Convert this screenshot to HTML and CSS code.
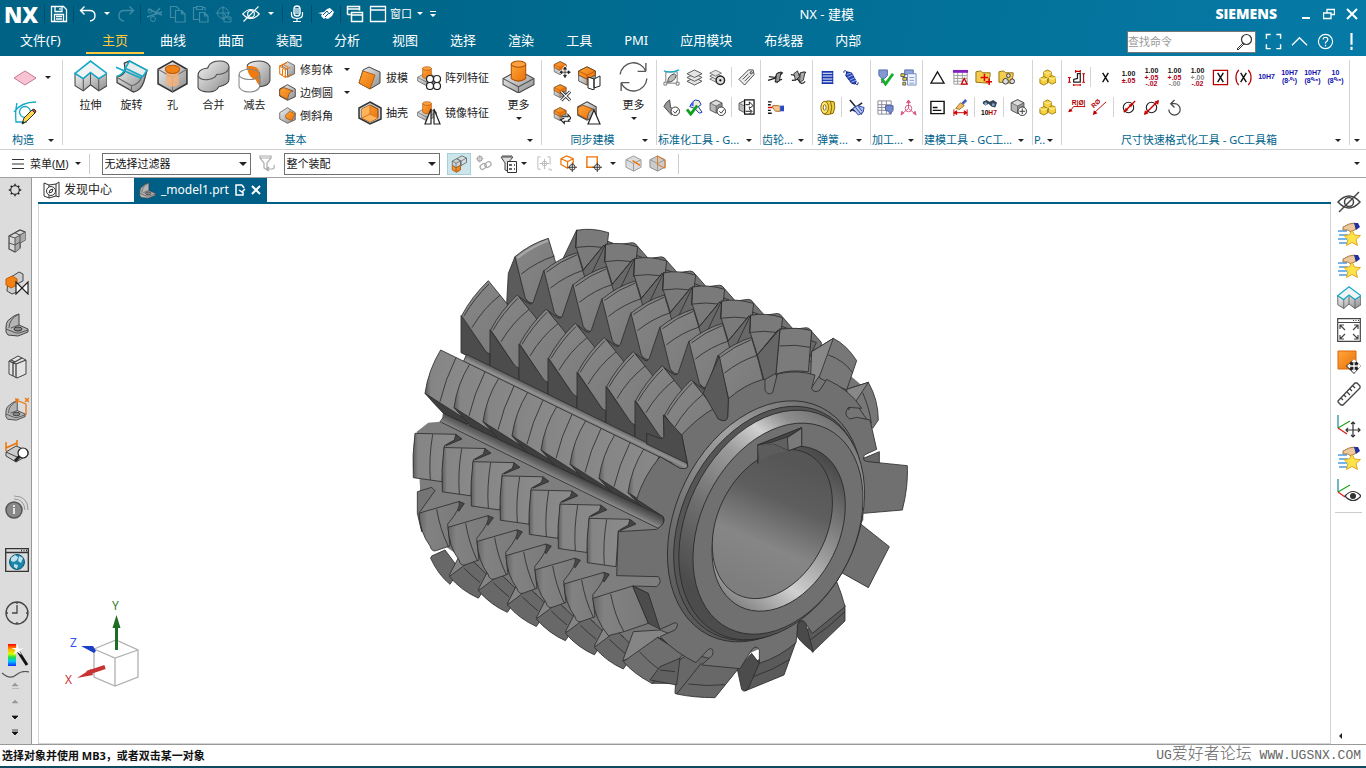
FILE: index.html
```html
<!DOCTYPE html>
<html lang="zh-CN">
<head>
<meta charset="utf-8">
<title>NX - 建模</title>
<link rel="stylesheet" href="styles.css">
</head>
<body>
<svg class="defs" aria-hidden="true">
<defs>
<linearGradient id="gs" x1="0" y1="0" x2="1" y2="1"><stop offset="0" stop-color="#f4f4f4"/><stop offset="1" stop-color="#8c8c8c"/></linearGradient>
<linearGradient id="go" x1="0" y1="0" x2="1" y2="1"><stop offset="0" stop-color="#ffa63a"/><stop offset="1" stop-color="#e8710a"/></linearGradient>
<linearGradient id="gb" x1="0" y1="0" x2="0" y2="1"><stop offset="0" stop-color="#ff0000"/><stop offset=".25" stop-color="#ffb000"/><stop offset=".45" stop-color="#d8ff00"/><stop offset=".6" stop-color="#20e040"/><stop offset=".78" stop-color="#00c8ff"/><stop offset="1" stop-color="#1030ff"/></linearGradient>
</defs>
<symbol id="save" viewBox="0 0 18 18"><path d="M1.500 1.500h12l3 3v12h-15zM5 1.500v5h7v-5M4.500 16.500v-7h9v7M6 11.500h6M6 14h6M10 3v2" fill="none" stroke="currentColor" stroke-width="1.300"/></symbol>
<symbol id="undo" viewBox="0 0 18 18"><path d="M5.500 1.500L1.500 5.500l4 4M1.500 5.500h9q5.500 0 5.500 5t-5 5.500" fill="none" stroke="currentColor" stroke-width="1.400"/></symbol>
<symbol id="cut" viewBox="0 0 18 18"><path d="M2 4l14 6M1 12l15-5M9 9l5-6" fill="none" stroke="currentColor" stroke-width="1.500"/><circle cx="4" cy="6" r="2" fill="none" stroke="currentColor"/><circle cx="7" cy="14" r="2.500" fill="none" stroke="currentColor"/></symbol>
<symbol id="copy" viewBox="0 0 18 18"><path d="M6.500 5.500h6l3.500 3.500v8h-9.500zM12.500 5.500v3.500h3.500M6.500 12.500h-5v-11h6l3 3" fill="none" stroke="currentColor" stroke-width="1.200"/></symbol>
<symbol id="paste" viewBox="0 0 18 18"><path d="M7 14.500H1.500v-12h3M10 2.500h3v3M4.500 1.500h6v3h-6zM7.500 7.500h5l3.500 3.500v6h-8.500zM12.500 7.500v3.500h3.500" fill="none" stroke="currentColor" stroke-width="1.200"/></symbol>
<symbol id="target" viewBox="0 0 18 18"><circle cx="8" cy="8" r="5.500" fill="none" stroke="currentColor"/><path d="M8 1v14M1 8h14M9 12h7v5h-7zM9 9l6 6" fill="none" stroke="currentColor"/></symbol>
<symbol id="eye" viewBox="0 0 24 24"><path d="M1 12Q12 0 23 12Q12 24 1 12z" fill="none" stroke="currentColor" stroke-width="1.500"/><circle cx="12" cy="12" r="4.500" fill="none" stroke="currentColor" stroke-width="1.500"/><path d="M2 22L22 2" stroke="currentColor" stroke-width="1.500"/></symbol>
<symbol id="mic" viewBox="0 0 18 18"><rect x="6" y="1" width="6" height="10" rx="3" fill="none" stroke="currentColor" stroke-width="1.400"/><path d="M3.500 7v2.500q0 4 5.500 4t5.500-4V7M9 13v4M5 16.500h8M8 3v6M10 3v6" fill="none" stroke="currentColor" stroke-width="1.200"/></symbol>
<symbol id="touch" viewBox="0 0 18 14"><path d="M1 6l6-1 3-3 3-1 4 4-2 4-4 3-3-1-1 1-3-3 1-2z" fill="currentColor"/><path d="M6 8l4-4 2 3 3-3M8 10l3-3" stroke="#005f80" fill="none"/></symbol>
<symbol id="wins" viewBox="0 0 18 18"><path d="M1.500 9.500v-8h12v4M1.500 4h12M1.500 9.500h3M5.500 7.500h11v9h-11zM5.500 10h11" fill="none" stroke="currentColor" stroke-width="1.500"/></symbol>
<symbol id="win" viewBox="0 0 18 18"><path d="M1.500 1.500h15v15h-15zM1.500 5h15" fill="none" stroke="currentColor" stroke-width="1.300"/></symbol>
<symbol id="mag" viewBox="0 0 18 18"><circle cx="11.500" cy="6.500" r="5" fill="none" stroke="#333" stroke-width="1.200"/><path d="M8 10l-6 6M9 11l-6 6M2 16l1 1" stroke="#333" fill="none"/></symbol>
<symbol id="full" viewBox="0 0 18 18"><path d="M1.500 6V1.500H6M12 1.500h4.500V6M16.500 12v4.500H12M6 16.500H1.500V12" fill="none" stroke="currentColor" stroke-width="1.500"/></symbol>
<symbol id="up" viewBox="0 0 18 18"><path d="M1 13L9 5l8 8" fill="none" stroke="currentColor" stroke-width="1.300"/></symbol>
<symbol id="help" viewBox="0 0 18 18"><circle cx="9" cy="9" r="7.500" fill="none" stroke="currentColor" stroke-width="1.200"/><path d="M6.500 7q0-2.500 2.500-2.500T11.500 7Q11.500 8.500 9 10v1M9 12.500V14" fill="none" stroke="currentColor" stroke-width="1.300"/></symbol>
<symbol id="plane" viewBox="0 0 24 24"><path d="M1 12L12 5l11 7-11 7z" fill="#f8c4d4" stroke="#c87890"/></symbol>
<symbol id="sketch" viewBox="0 0 24 24"><path d="M4 2Q2 10 3 21H14M1 11Q8 1 23 1" fill="none" stroke="#12a8c8" stroke-width="1.300"/><circle cx="12" cy="11" r="5.500" fill="none" stroke="#12a8c8" stroke-width="1.300"/><path d="M9 23l2-6 8-8 3 3-8 8z" fill="#ffd84a" stroke="#333"/><path d="M19 9l2-1 2 2-1 2z" fill="#d04040" stroke="#333"/><path d="M9 23l1-3 2 2z" fill="#222"/></symbol>
<symbol id="ext" viewBox="0 0 32 32"><path d="M1 13v12l8 5 7-6 8 6 8-5V13l-8 5-8-6-7 6z" fill="url(#gs)" stroke="#444"/><path d="M9 18v12M16 12v12M24 18v12" stroke="#555"/><path d="M1 13L16 1l16 12-8 5-8-6-7 6z" fill="#f2f4f4" stroke="#12a8c8" stroke-width="1.500"/></symbol>
<symbol id="rev" viewBox="0 0 32 32"><path d="M9 3l5-2 17 9-3 11q-3 9-10 10L2 22v-6Q8 16 10 10z" fill="url(#gs)" stroke="#444" stroke-width="1.300"/><path d="M2 17l14 8q7-1 10-9M16 25v6" stroke="#666" fill="none"/><path d="M14 1l17 9-4 6-17-8zM10 8Q8 14 2 16" fill="#e8ecec" stroke="#12a8c8" stroke-width="1.500"/><path d="M1 7l25 11" stroke="#12a8c8" stroke-width="1.500"/></symbol>
<symbol id="cube" viewBox="0 0 24 24"><path d="M12 1l10 5v12l-10 5-10-5V6z" fill="#ddd" stroke="#444"/><path d="M2 6l10 5v12L2 18z" fill="#b8b8b8"/><path d="M12 11l10-5v12l-10 5z" fill="#929292"/><path d="M2 6l10 5 10-5M12 11v12M12 1l10 5v12l-10 5-10-5V6z" fill="none" stroke="#444"/></symbol>
<symbol id="hole" viewBox="0 0 32 32"><path d="M16 1l14 8v14l-14 8-14-8V9z" fill="url(#gs)" stroke="#333" stroke-width="1.500"/><path d="M2 9l14 8 14-8M16 17v14" fill="none" stroke="#777"/><path d="M10 10v14q6 4 12 0V10z" fill="#f4b27a" opacity=".85"/><ellipse cx="16" cy="9" rx="7" ry="4" fill="#f08218" stroke="#c05a00"/></symbol>
<symbol id="unite" viewBox="0 0 32 32"><path d="M11 6q3-5 11-5t9 5v13q0 5-10 7-2 5-10 5T1 27V15q0-6 8-7 2 0 2-2z" fill="url(#gs)" stroke="#444"/><path d="M1 15q2 5 10 4 7-1 8-5 11 0 12-7" fill="none" stroke="#555"/></symbol>
<symbol id="sub" viewBox="0 0 32 32"><path d="M9 5q3-4 11-4t11 5v14q-1 5-10 6V14q0-5-12-5z" fill="url(#gs)" stroke="#444"/><path d="M9 6q12-1 12 8v11q-3-3-4-6-6-1-8-10z" fill="#ee7a10"/><path d="M1 14v12q2 5 10 5t10-5V14" fill="none" stroke="#888"/><ellipse cx="11" cy="14" rx="10" ry="5" fill="none" stroke="#888"/></symbol>
<symbol id="trim" viewBox="0 0 24 24"><path d="M12 1l10 5v12l-10 5V12L4 7z" fill="url(#gs)" stroke="#444"/><path d="M1 7l8 5v11l-8-5zM1 7l10-5M9 12l7-3M5 4l8 5M5 9v12M9 23l8-4" fill="none" stroke="#ec7408" stroke-width="1.500"/></symbol>
<symbol id="ocube" viewBox="0 0 24 24"><path d="M12 1l10 5v12l-10 5-10-5V6z" fill="url(#gs)" stroke="#444"/><path d="M12 1l10 5v5l-10 5-10-5V6z" fill="url(#go)" stroke="#6a4014"/><path d="M2 6l10 5 10-5M12 11v12" fill="none" stroke="#b85000"/></symbol>
<symbol id="blend" viewBox="0 0 24 24"><path d="M12 1l11 6v11l-11 5L1 17V7z" fill="url(#gs)" stroke="#444" stroke-width="1.300"/><path d="M1 8l6-3 13 5q-6 1-7 8l-1 4L1 16z" fill="url(#go)" stroke="#7a4010"/></symbol>
<symbol id="chamf" viewBox="0 0 24 24"><path d="M12 1l11 7v10l-11 5L1 17V8z" fill="url(#gs)" stroke="#444"/><path d="M9 12l6-6 8 4-5 9-8-3z" fill="url(#go)" stroke="#a05010"/></symbol>
<symbol id="draft" viewBox="0 0 24 24"><path d="M11 1l11 5v11l-10 6L1 17 5 4z" fill="url(#gs)" stroke="#444"/><path d="M5 5l12 4-5 14L1 17z" fill="url(#go)" stroke="#b86010"/></symbol>
<symbol id="shell" viewBox="0 0 24 24"><path d="M12 1l11 6v11l-11 5L1 17V7z" fill="#ccc" stroke="#333" stroke-width="1.500"/><path d="M12 4l8 4v9l-8 4-8-4V8z" fill="url(#go)" stroke="#7a4010"/><path d="M4 8l8-4v9l8 4-8 4-8-4z" fill="#ffb45a"/><path d="M12 4v9l-8 4M12 13l8 4" fill="none" stroke="#d87820"/></symbol>
<symbol id="boss" viewBox="0 0 32 32"><path d="M16 10l15 8v6l-15 8-15-8v-6z" fill="url(#gs)" stroke="#444"/><path d="M1 18l15 8 15-8M16 26v6" fill="none" stroke="#555"/><path d="M9 4v14q7 5 14 0V4z" fill="url(#go)" stroke="#a85000"/><ellipse cx="16" cy="4" rx="7" ry="3" fill="#ffa040" stroke="#a85000"/></symbol>
<symbol id="patt" viewBox="0 0 24 24"><use href="#boss" width="20" height="20"/><g fill="#fff" stroke="#222" stroke-width="1.200"><circle cx="13" cy="13" r="3.500"/><circle cx="20" cy="13" r="3.500"/><circle cx="13" cy="20" r="3.500"/><circle cx="20" cy="20" r="3.500"/></g></symbol>
<symbol id="mirr" viewBox="0 0 24 24"><use href="#boss" width="20" height="20"/><path d="M14 8v15H8zM17 8v15h6z" fill="#fff" stroke="#222" stroke-width="1.200"/></symbol>
<symbol id="mvf" viewBox="0 0 24 24"><use href="#ocube" width="19" height="19"/><path d="M16 8v14M9 15h14M16 8l-2 3h4zM16 22l-2-3h4zM9 15l3-2v4zM23 15l-3-2v4z" stroke="#fff" stroke-width="3"/><path d="M16 8v14M9 15h14M16 8l-2 3h4zM16 22l-2-3h4zM9 15l3-2v4zM23 15l-3-2v4z" stroke="#222" fill="#222"/></symbol>
<symbol id="delf" viewBox="0 0 24 24"><use href="#ocube" width="19" height="19"/><path d="M11 10l12 12M23 10L11 22" stroke="#222" stroke-width="4"/><path d="M11 10l12 12M23 10L11 22" stroke="#fff" stroke-width="1.500"/></symbol>
<symbol id="repf" viewBox="0 0 24 24"><use href="#ocube" width="19" height="19"/><path d="M11 13h9v-3l4 5-4 3M23 19h-8v3l-5-5 5-2" fill="#fff" stroke="#222" stroke-width="1.500"/></symbol>
<symbol id="offf" viewBox="0 0 24 24"><use href="#ocube" width="20" height="20"/><path d="M11 11l6 2v11l-6-2zM17 13l6-3v10l-6 2z" fill="#fff" stroke="#222"/></symbol>
<symbol id="resz" viewBox="0 0 24 24"><use href="#blend" width="20" height="20"/><path d="M17 9l6 14H11z" fill="#fff" stroke="#222" stroke-width="1.200"/></symbol>
<symbol id="cyc" viewBox="0 0 32 32"><path d="M3 14A13 13 0 0 1 28 11V3M28 11h-8M29 18A13 13 0 0 1 4 22v8M4 22h8" fill="none" stroke="#555" stroke-width="1.300"/></symbol>
<symbol id="chkf" viewBox="0 0 18 18"><path d="M3 3h12v12H3z" fill="none" stroke="#777"/><path d="M1 2q8 3 16-1" fill="none" stroke="#12a8c8" stroke-width="1.500"/><path d="M5 14q0-7 7-9l2 2q-2 7-9 7z" fill="#bbb" stroke="#444"/><g fill="#fff" stroke="#777"><path d="M1 14h3v3H1zM14 14h3v3h-3z"/></g></symbol>
<symbol id="lay" viewBox="0 0 18 18"><g fill="#e4e4e4" stroke="#555"><path d="M1 13l8 4 8-4-8-4z"/><path d="M1 9l8 4 8-4-8-4z"/><path d="M1 5l8 4 8-4-8-4z"/></g></symbol>
<symbol id="layg" viewBox="0 0 18 18"><use href="#lay" width="14" height="15"/><circle cx="12" cy="12" r="4.500" fill="#ddd" stroke="#222" stroke-width="1.500"/><circle cx="12" cy="12" r="1.200"/></symbol>
<symbol id="tag" viewBox="0 0 18 18"><path d="M1 11L11 1h5l1 5L7 17z" fill="#eee" stroke="#444"/><path d="M5 11l6-6M7 13l6-6" stroke="#444"/><circle cx="14" cy="4" r="1.200" fill="none" stroke="#333"/></symbol>
<symbol id="okp" viewBox="0 0 18 18"><path d="M1 8q2-5 6-7l1 8 7 3-6 5z" fill="#999" stroke="#444"/><circle cx="13" cy="13" r="4.500" fill="#fff" stroke="#333"/><path d="M11 13l2 2 3-4" fill="none" stroke="#333"/></symbol>
<symbol id="okc" viewBox="0 0 18 18"><use href="#cube" width="15" height="16"/><circle cx="13" cy="13" r="4.500" fill="#fff" stroke="#333"/><path d="M11 13l2 2 3-4" fill="none" stroke="#333"/></symbol>
<symbol id="okh" viewBox="0 0 18 18"><path d="M7 3l3-2 4 1 2 4-3 2 4 6-3 1-5-5-5-2z" fill="#f0ead0" stroke="#1030c0"/><path d="M1 11l4 5 7-9" fill="none" stroke="#10a020" stroke-width="3"/><path d="M8 3l-4 3 4 2" fill="#4060ff"/></symbol>
<symbol id="exp" viewBox="0 0 18 18"><use href="#cube" width="14" height="16"/><path d="M7 1h10v15H7z" fill="#fff" stroke="#111" stroke-width="1.300"/><path d="M8 6h4V3l4 4-4 3V8M8 13h6M12 11l3 2-3 3" fill="none" stroke="#111"/></symbol>
<symbol id="gear1" viewBox="0 0 18 18"><path d="M1 12l7-2 4-6h5M2 8l7 1 2 6M8 13l8-2M9 8l7-3" fill="none" stroke="#222" stroke-width="1.300"/><path d="M10 5l5-2-2 10-4 1z" fill="#999" stroke="#222"/></symbol>
<symbol id="gear2" viewBox="0 0 18 18"><path d="M1 6q5 0 8 6t7 1M2 12q7 0 8-5t7-3" fill="none" stroke="#222" stroke-width="1.300"/><path d="M4 5l4-3 2 6-4 4zM11 4l5-1-2 9-4 2z" fill="#aaa" stroke="#333"/></symbol>
<symbol id="hand" viewBox="0 0 18 18"><path d="M1 3h4M1 15h4M1 6h3M1 12h3" stroke="#111" stroke-width="1.500"/><path d="M1 9h5" stroke="#d00" stroke-width="1.500"/><path d="M6 7h6l2 1v5H9L6 9z" fill="#f6c890" stroke="#a07030"/><path d="M14 7h4v6h-4z" fill="#2848c8"/></symbol>
<symbol id="spr1" viewBox="0 0 18 18"><path d="M3 3h12M3 6h12M3 9h12M3 12h12M3 15h12" stroke="#1838b0" stroke-width="2"/><path d="M3.500 2v14M14.500 2v14" stroke="#1838b0"/></symbol>
<symbol id="spr2" viewBox="0 0 18 18"><path d="M5 3l5 1 5 9-1 3-4-1-6-8z" fill="#2848b8" stroke="#102080"/><path d="M5 6l5-2M6 9l6-3M8 12l6-3M10 14l5-2" stroke="#a8b8f8"/><path d="M5 3Q2 0 2 4M14 15q3 4 3-1" fill="none" stroke="#102080"/></symbol>
<symbol id="spr3" viewBox="0 0 18 18"><path d="M5 3q4-2 11 0 2 6-1 12-8 3-11 0z" fill="#f0d040" stroke="#806000"/><ellipse cx="6" cy="9" rx="4" ry="6.500" fill="#ffe878" stroke="#806000"/><ellipse cx="6" cy="9" rx="1.500" ry="3" fill="#fff" stroke="#806000"/><path d="M12 2q3 7 0 14" fill="none" stroke="#806000"/></symbol>
<symbol id="spr4" viewBox="0 0 18 18"><path d="M2 1l11 13M2 13L15 4M3 11l12 5" stroke="#223" stroke-width="1.600"/><path d="M5 10l5-3 7 2-1 5-5 3z" fill="#b8c4f0" stroke="#2040a0"/><path d="M8 9l5 6M11 8l4 5" stroke="#2040a0"/></symbol>
<symbol id="ncok" viewBox="0 0 18 18"><path d="M2 1h9v6L8 10H5L2 7z" fill="#8498d0" stroke="#5068b0"/><path d="M6 10l-1 5" stroke="#c050c0" stroke-width="2"/><path d="M5 10l4 6 8-11" fill="none" stroke="#14b02c" stroke-width="3"/></symbol>
<symbol id="ncdoc" viewBox="0 0 18 18"><path d="M5 1h9v5H5z" fill="#90a4d8" stroke="#5068b0"/><path d="M8 5h9v12H8z" fill="#f0f4ff" stroke="#7088c0"/><path d="M10 9h5M10 12h5M10 15h5" stroke="#8098d0"/><path d="M1 5h4v3H1zM3 9h4v3H3zM3 14h3v3H3z" fill="#e8d040" stroke="#555"/></symbol>
<symbol id="nctab" viewBox="0 0 18 18"><path d="M1 2h14v14H1zM1 6h14M1 9h14M1 12h14M5 2v14M10 2v14" fill="#fff" stroke="#889"/><path d="M9 7h8v5l-3 4-2-3-3-1z" fill="#7488cc" stroke="#5060a0"/></symbol>
<symbol id="csys" viewBox="0 0 18 18"><path d="M9 10V3M9 10l-6 5M9 10l6 5M9 1L7 4h4zM1 17l1-4 2 2zM17 17l-1-4-2 2z" fill="#d85880" stroke="#d85880"/><circle cx="9" cy="10" r="3.500" fill="none" stroke="#d85880"/></symbol>
<symbol id="tri" viewBox="0 0 18 18"><path d="M9 3l7 12H2z" fill="none" stroke="#111" stroke-width="1.300"/></symbol>
<symbol id="tab2" viewBox="0 0 18 18"><path d="M2 3h14v13H2zM2 7h14M2 10h14M2 13h14M6 3v13M11 3v13" fill="#fff" stroke="#999"/><path d="M1 1h16v3H1z" fill="#8420c0"/><path d="M13 10l3 6h-6z" fill="#fff" stroke="#c00" stroke-width="1.300"/></symbol>
<symbol id="fold1" viewBox="0 0 18 18"><path d="M1 3l5-1 2 2h8v3l-2 8-13-1z" fill="#f4cc50" stroke="#907010"/><path d="M10 5v8M6 9h8M15 10v7M11.500 13.500H18" stroke="#d00" stroke-width="1.600"/></symbol>
<symbol id="fold2" viewBox="0 0 18 18"><path d="M1 3l5-1 2 2h8v3l-2 8-13-1z" fill="#f4cc50" stroke="#907010"/><g fill="#ddd" stroke="#333"><circle cx="11" cy="7" r="2"/><circle cx="8" cy="13" r="3"/><circle cx="15" cy="13" r="2.500"/></g></symbol>
<symbol id="note" viewBox="0 0 18 18"><path d="M2 2.500h14v13H2zM4 9h5M4 12h9" fill="#fff" stroke="#111" stroke-width="1.500"/></symbol>
<symbol id="brush" viewBox="0 0 18 18"><path d="M14 0l2 2-4 4-2-2z" fill="#4060c0"/><path d="M9 4l4 3-5 4-4-1z" fill="#f0c060" stroke="#a07020"/><path d="M2 11v7M16 11v7M2 14.500h14M2 14.500l3-2v4zM16 14.500l-3-2v4z" stroke="#c00" fill="#c00"/></symbol>
<symbol id="cadd" viewBox="0 0 18 18"><use href="#cube" width="16" height="16"/><circle cx="13" cy="13" r="4.500" fill="#fff" stroke="#333"/><path d="M10 13h6M13 10v6" stroke="#333"/></symbol>
<symbol id="gold" viewBox="0 0 18 18"><g fill="#f6d040" stroke="#a08010"><path d="M5 3l4-2 4 2v5l-4 2-4-2z"/><path d="M1 10l4-2 4 2v5l-4 2-4-2z"/><path d="M10 9l4-2 4 2v5l-4 2-4-2z"/></g><path d="M1 10l4 2 4-2M5 3l4 2 4-2M10 9l4 2 4-2" fill="none" stroke="#fff6b0"/></symbol>
<symbol id="tdim" viewBox="0 0 18 18"><path d="M6 14h7V5h-3v5l-4 1z" fill="none" stroke="#222" stroke-width="1.300"/><path d="M0 9h3M0 14h3M1.500 9v5M15 5h3M15 14h3M16.500 5v9M8 1v3M13 1v3M8 2.500h5M6 16v2M13 16v2M6 17h7" stroke="#c00" stroke-width="1.200"/></symbol>
<symbol id="ix" viewBox="0 0 18 18"><path d="M6 4l6 10M12 4L6 14" stroke="#111" stroke-width="1.500"/></symbol>
<symbol id="ixb" viewBox="0 0 18 18"><path d="M1.500 1.500h15v15h-15z" fill="none" stroke="#b00" stroke-width="1.300"/><path d="M6 4l6 10M12 4L6 14" stroke="#111" stroke-width="1.500"/></symbol>
<symbol id="ixp" viewBox="0 0 18 18"><path d="M4 1Q1 4 1 9t3 8M14 1q3 3 3 8t-3 8" fill="none" stroke="#b00" stroke-width="1.300"/><path d="M6 4l6 10M12 4L6 14" stroke="#111" stroke-width="1.500"/></symbol>
<symbol id="dia1" viewBox="0 0 18 18"><circle cx="9" cy="9" r="5.500" fill="none" stroke="#222" stroke-width="1.200"/><path d="M4 14L16 2" stroke="#c00" stroke-width="1.500"/><path d="M5 13l1-4 3 3zM13 5l-1 4-3-3z" fill="#c00"/></symbol>
<symbol id="dia2" viewBox="0 0 18 18"><circle cx="9" cy="9" r="5.500" fill="none" stroke="#222" stroke-width="1.200"/><path d="M2 16L16 2" stroke="#c00" stroke-width="1.500"/><path d="M1 17l1-5 4 3zM17 1l-1 5-4-3z" fill="#c00"/></symbol>
<symbol id="rot" viewBox="0 0 18 18"><path d="M5 5H9A6 6 0 1 1 3 11M9 1L5 5l4 4" fill="none" stroke="#444" stroke-width="1.300"/></symbol>
<symbol id="filt" viewBox="0 0 18 18"><path d="M2 1h11v2L9 8v7l-3-2V8L2 3zM2 3h11M11 12l-2 2 2 2M9 14h5q3 0 2-4" fill="none" stroke="#aaa" stroke-width="1.200"/></symbol>
<symbol id="asm" viewBox="0 0 24 24"><path d="M9 5l7-4 6 3v6l-7 4-6-3z" fill="#d4dcdc" stroke="#555"/><path d="M9 5l6 3 7-4M15 8v6" fill="none" stroke="#666"/><path d="M3 8l6-3 5 3v6l-6 3-5-3z" fill="#c8d4d4" stroke="#555"/><path d="M3 14l5 3 6-3v6l-5 3-6-3z" fill="url(#go)" stroke="#a85000"/><path d="M3 8l5 3 6-3M8 11v12" fill="none" stroke="#666"/></symbol>
<symbol id="link" viewBox="0 0 18 18"><path d="M5 0v8M1 4h8" stroke="#bbb"/><g fill="none" stroke="#aaa" stroke-width="1.300"><circle cx="5" cy="4" r="2.500"/><rect x="5" y="10" width="7" height="5" rx="2.500" transform="rotate(-35 8 12)"/><rect x="10" y="8" width="7" height="5" rx="2.500" transform="rotate(-35 13 10)"/></g></symbol>
<symbol id="fdoc" viewBox="0 0 18 18"><path d="M1 2h12M1 2l4 6v7l3 1V8l5-6M2 1h10" fill="#ddd" stroke="#444"/><path d="M7.500 6.500h9v11h-9z" fill="#fff" stroke="#333"/><path d="M9 10h3M14 10h1M9 14h3M14 14h1" stroke="#333" stroke-width="1.500"/></symbol>
<symbol id="rect" viewBox="0 0 18 18"><path d="M5 2H2v13h3M12 2h3v8M13 15h3v2M9 4v11M4 9h10" fill="none" stroke="#bbb"/><circle cx="9" cy="9" r="2.500" fill="none" stroke="#bbb"/></symbol>
<symbol id="obox" viewBox="0 0 18 18"><path d="M1 4l6-3 7 3v6l-6 4-7-4zM1 4l7 3 6-3M8 7v7" fill="none" stroke="#ec7408" stroke-width="1.300"/><circle cx="13" cy="13" r="3" fill="#fff" stroke="#333"/><path d="M13 8v10M8 13h10" stroke="#333"/></symbol>
<symbol id="osq" viewBox="0 0 18 18"><path d="M2 2h11v11H2z" fill="none" stroke="#ec7408" stroke-width="1.500"/><circle cx="13" cy="13" r="3" fill="#fff" stroke="#333"/><path d="M13 8v10M8 13h10" stroke="#333"/></symbol>
<symbol id="cf1" viewBox="0 0 18 18"><path d="M9 1l8 4v8l-8 4-8-4V5z" fill="#ddd" stroke="#999"/><path d="M1 5l8 4 8-4M9 9v8" fill="none" stroke="#999"/><path d="M8 6l8 5" stroke="#ec7408" stroke-width="1.500"/></symbol>
<symbol id="cf2" viewBox="0 0 18 18"><path d="M9 1l8 4v8l-8 4-8-4V5z" fill="#ccc" stroke="#888"/><path d="M1 5l8 4 8-4M9 9v8" fill="none" stroke="#999"/><path d="M9 1v9M9 1l8 5v8l-8-4" fill="none" stroke="#ec7408"/></symbol>
<symbol id="cog" viewBox="0 0 18 18"><path d="M9 1v16M1 9h16M3.500 3.500l11 11M14.500 3.500l-11 11" stroke="#222" stroke-width="1.800"/><circle cx="9" cy="9" r="5.500" fill="#dcdcdc" stroke="#222" stroke-width="1.400"/></symbol>
<symbol id="disc" viewBox="0 0 18 18"><path d="M1 2l5 2v13l-5-2zM16 1l-3 2v12l3 1zM6 4l7-1M13 15l-7 2" fill="none" stroke="#333"/><circle cx="8" cy="10" r="4.500" fill="#fff" stroke="#333"/><path d="M6 12l1-3 3-1-1 3z" fill="none" stroke="#333"/></symbol>
<symbol id="part" viewBox="0 0 24 24"><path d="M1 15q0-7 4-9 4-4 9-5v11l9 4v3l-10 4-10-1-2-3z" fill="#b4b4b4" stroke="#444"/><path d="M4 15Q4 6 14 1" fill="none" stroke="#555"/><path d="M1 16l10 4h3l9-3M14 12l-8 3" fill="none" stroke="#555"/><ellipse cx="13" cy="16" rx="4" ry="2" fill="#888" stroke="#333"/></symbol>
<symbol id="nav" viewBox="0 0 24 24"><path d="M4 7l11-6 5 2v8l-5 3v5l-5 4-6-3z" fill="#d8d8d8" stroke="#444" stroke-width="1.200"/><path d="M10 9v14l5-4V6zM15 6v8l5-3V3z" fill="#aaa"/><path d="M4 7l6 2 10-6M10 9v14M4 14l6 2 5-3M15 6v13M10 4l5 2" fill="none" stroke="#555"/></symbol>
<symbol id="con" viewBox="0 0 24 24"><path d="M3 8L14 1l4 2v7l-6 3v8l-5 2-5-3z" fill="#ccc" stroke="#444"/><path d="M1 8l6-3 5 3v6l-6 3-5-3z" fill="#f08218" stroke="#c85a00"/><path d="M11 11l12 12V11L11 23z" fill="#fff" stroke="#222" stroke-width="1.200"/></symbol>
<symbol id="books" viewBox="0 0 24 24"><path d="M4 6l9-5 8 4v14l-9 4-8-4z" fill="#e4e4e4" stroke="#444"/><path d="M4 6l4 2v13M8 8l9-5M8 8l3 1v14M11 9l10-4M6 5l4 2" fill="none" stroke="#444" stroke-width="1.300"/></symbol>
<symbol id="pdim" viewBox="0 0 24 24"><use href="#part" y="3" width="21" height="21"/><path d="M11 1v4M21 7v11M11 3l10 4M20 1l4 4M24 1l-4 4M14 2l-3 1 2 3" fill="none" stroke="#ec7408" stroke-width="1.300"/></symbol>
<symbol id="mag2" viewBox="0 0 24 24"><path d="M1 13l10-6 12 5v4l-12 7-10-6z" fill="#ccc" stroke="#444"/><path d="M1 13l11 5 11-6" fill="none" stroke="#444"/><path d="M1 3v9M12 1v6M1 9l11-5" stroke="#ec7408" stroke-width="1.500"/><path d="M15 17l-5 5" stroke="#222" stroke-width="3"/><circle cx="18" cy="14" r="5" fill="#fff" stroke="#222" stroke-width="1.200"/></symbol>
<symbol id="info" viewBox="0 0 24 24"><circle cx="9" cy="15" r="8" fill="#888" stroke="#555" stroke-width="1.500"/><path d="M9 13v6M9 10v2" stroke="#fff" stroke-width="1.500"/><path d="M9 4q10 0 11 11M9 1q14 0 14 14" fill="none" stroke="#999"/></symbol>
<symbol id="web" viewBox="0 0 24 24"><path d="M.7.7h22.600v22.600H.7zM1 4.500h22M16 2.500h1M18.500 2.500h1M21 2.500h1" fill="none" stroke="#333" stroke-width="1.300"/><circle cx="12" cy="14" r="7.500" fill="#1c86a8" stroke="#0c5c78"/><path d="M6 10l4-3 3 2-1 3-3 2-3-1zM14 8l4 2-2 5-3-2zM9 16l4 1-1 4-3-2z" fill="#bfe2ee"/></symbol>
<symbol id="clock" viewBox="0 0 24 24"><circle cx="12" cy="12" r="11" fill="none" stroke="#444" stroke-width="1.300"/><path d="M12 4v8H7M12 1v2M12 21v2M1 12h2M21 12h2" fill="none" stroke="#444" stroke-width="1.300"/></symbol>
<symbol id="wand" viewBox="0 0 24 24"><path d="M3 1h8v22H3z" fill="url(#gb)"/><path d="M13 8l9 14" stroke="#111" stroke-width="3"/><path d="M12 1l1.500 5 5-1-4 3 2 4-4-3-4 3 2-5-4-2 5 0z" fill="#fff"/></symbol>
<symbol id="star" viewBox="0 0 24 24"><path d="M1 9h9M2 13h9M1 17h9M2 21h8" stroke="#4c9ce0" stroke-width="1.500"/><path d="M6 5l6-3 6-1 1 6-5 3-3-2H6z" fill="#eec89c" stroke="#a07848"/><path d="M17 1h4l2 4-4 3z" fill="#2030a0"/><path d="M15 8l2.500 5 6 .5-4.500 4 1.500 6-5.500-3-5.500 3L11 17.500l-4-4 5.500-.5z" fill="#ffe34a" stroke="#e0a820"/></symbol>
<symbol id="fit" viewBox="0 0 24 24"><path d="M.7.7h22.600v22.600H.7zM1 4.500h22M16 2.500h1M18.500 2.500h1M21 2.500h1M3 11V7h4M3 7l5 5M21 11V7h-4M21 7l-5 5M3 17v4h4M3 21l5-5M21 17v4h-4M21 21l-5-5" fill="none" stroke="#444" stroke-width="1.200"/></symbol>
<symbol id="omv" viewBox="0 0 24 24"><path d="M1 1h18v18H1z" fill="url(#go)" stroke="#d86808"/><path d="M17 9l7 7-7 8-8-8z" fill="#222"/><path d="M17 10v12M11 16h12M15 12l2-2 2 2M15 20l2 2 2-2M13 14l-2 2 2 2M21 14l2 2-2 2" fill="none" stroke="#fff" stroke-width="1.300"/></symbol>
<symbol id="ruler" viewBox="0 0 24 24"><path d="M1 19L18 1h2l3 3v2L6 23H4l-3-3zM4 16l2 2M7 13l2 2M10 10l3 3M13 7l2 2M16 4l2 2" fill="#fff" stroke="#444" stroke-width="1.300"/></symbol>
<symbol id="amv" viewBox="0 0 24 24"><path d="M1 1v13" stroke="#2090a8" stroke-width="1.300"/><path d="M1 14l12-7" stroke="#20a820" stroke-width="1.300"/><path d="M1 14l9 6" stroke="#e02020" stroke-width="1.300"/><path d="M16 8v15M9 16h14M14 10l2-2 2 2M14 21l2 2 2-2M11 14l-2 2 2 2M21 14l2 2-2 2" fill="none" stroke="#333" stroke-width="1.200"/></symbol>
<symbol id="aeye" viewBox="0 0 24 24"><path d="M1 1v13" stroke="#2090a8" stroke-width="1.300"/><path d="M1 14l12-7" stroke="#20a820" stroke-width="1.300"/><path d="M1 14l7 5" stroke="#e02020" stroke-width="1.300"/><path d="M8 18q8-9 16 0-8 9-16 0z" fill="#fff" stroke="#333" stroke-width="1.200"/><circle cx="16" cy="18" r="3" fill="#333"/></symbol>
</svg>

<header class="head">
  <div class="titlebar">
    <div class="quick">
      <strong class="logo">NX</strong><i class="vs"></i>
      <button aria-label="保存"><svg class="i18"><use href="#save"/></svg></button><i class="vs"></i>
      <button aria-label="撤销"><svg class="i18"><use href="#undo"/></svg></button><i class="caret near"></i>
      <button class="off flip" aria-label="重做"><svg class="i18"><use href="#undo"/></svg></button><i class="vs"></i>
      <button class="off" aria-label="剪切"><svg class="i18"><use href="#cut"/></svg></button>
      <button class="off" aria-label="复制"><svg class="i18"><use href="#copy"/></svg></button>
      <button class="off" aria-label="粘贴"><svg class="i18"><use href="#paste"/></svg></button>
      <button class="off" aria-label="重复"><svg class="i18"><use href="#target"/></svg></button>
      <button class="hide" aria-label="隐藏"><svg class="i18"><use href="#eye"/></svg></button><i class="caret wide"></i><i class="vs"></i>
      <button aria-label="语音"><svg class="i18"><use href="#mic"/></svg></button><i class="vs"></i>
      <button aria-label="触摸"><svg class="i18"><use href="#touch"/></svg></button><i class="vs"></i>
      <button aria-label="切换窗口"><svg class="i18"><use href="#wins"/></svg></button>
      <button class="winbtn"><svg class="i18"><use href="#win"/></svg>窗口</button><i class="caret"></i>
      <button aria-label="自定义"><svg class="i10" viewBox="0 0 10 10"><path d="M2 2h6v1H2zM2 5h6L5 8z" fill="#fff"/></svg></button>
    </div>
    <h1 class="title">NX - 建模</h1>
    <div class="wctl">
      <strong class="brand">SIEMENS</strong>
      <button aria-label="最小化"><svg class="i12" viewBox="0 0 12 12"><path d="M2 10h8" stroke="#fff" stroke-width="2"/></svg></button>
      <button aria-label="还原"><svg class="i12" viewBox="0 0 12 12"><path d="M4 5V1.500h7.500v5H8M.500 5h7.500v5.500H.500z" fill="none" stroke="#fff" stroke-width="1.300"/></svg></button>
      <button aria-label="关闭"><svg class="i12" viewBox="0 0 12 12"><path d="M1 1l10 10M11 1L1 11" stroke="#fff" stroke-width="2"/></svg></button>
    </div>
  </div>
  <div class="menurow">
    <nav class="tabs">
      <a class="file" href="#">文件(F)</a><a class="on" href="#">主页</a><a href="#">曲线</a><a href="#">曲面</a><a href="#">装配</a><a href="#">分析</a><a href="#">视图</a><a href="#">选择</a><a href="#">渲染</a><a href="#">工具</a><a href="#">PMI</a><a href="#">应用模块</a><a href="#">布线器</a><a href="#">内部</a>
    </nav>
    <div class="search"><input type="text" placeholder="查找命令" aria-label="查找命令"><button aria-label="搜索"><svg class="i18"><use href="#mag"/></svg></button></div>
    <div class="hicons">
      <button aria-label="全屏"><svg class="i16"><use href="#full"/></svg></button>
      <button aria-label="最小化功能区"><svg class="i16"><use href="#up"/></svg></button>
      <button aria-label="帮助"><svg class="i16"><use href="#help"/></svg></button>
      <button aria-label="提示"><svg class="i16" viewBox="0 0 16 16"><path d="M8 0v11M8 13v3" stroke="#fff" stroke-width="2"/></svg></button>
    </div>
  </div>
</header>

<section class="ribbon">
  <div class="group g1">
    <div class="gbody"><div class="col">
      <button class="med"><svg class="i24"><use href="#plane"/></svg><i class="caret"></i></button>
      <button class="med"><svg class="i24"><use href="#sketch"/></svg></button>
    </div></div>
    <div class="gfoot"><span>构造</span><i class="caret"></i></div>
  </div>
  <div class="group g2">
    <div class="gbody">
      <button class="big"><svg class="i32"><use href="#ext"/></svg>拉伸</button>
      <button class="big"><svg class="i32"><use href="#rev"/></svg>旋转</button>
      <button class="big"><svg class="i32"><use href="#hole"/></svg>孔</button>
      <button class="big"><svg class="i32"><use href="#unite"/></svg>合并</button>
      <button class="big"><svg class="i32"><use href="#sub"/></svg>减去</button>
      <div class="col three">
        <button class="sm"><svg class="i16"><use href="#trim"/></svg>修剪体<i class="caret"></i></button>
        <button class="sm"><svg class="i16"><use href="#blend"/></svg>边倒圆<i class="caret"></i></button>
        <button class="sm"><svg class="i16"><use href="#chamf"/></svg>倒斜角</button>
      </div>
      <div class="col c4">
        <button class="med"><svg class="i24"><use href="#draft"/></svg>拔模</button>
        <button class="med"><svg class="i24"><use href="#shell"/></svg>抽壳</button>
      </div>
      <div class="col c5">
        <button class="med"><svg class="i24"><use href="#patt"/></svg>阵列特征</button>
        <button class="med"><svg class="i24"><use href="#mirr"/></svg>镜像特征</button>
      </div>
      <button class="big"><svg class="i32"><use href="#boss"/></svg>更多<i class="caret"></i></button>
    </div>
    <div class="gfoot mid"><span>基本</span><i class="caret"></i></div>
  </div>
  <div class="group g3">
    <div class="gbody">
      <div class="col three">
        <button class="sm"><svg class="i18"><use href="#mvf"/></svg></button>
        <button class="sm"><svg class="i18"><use href="#delf"/></svg></button>
        <button class="sm"><svg class="i18"><use href="#repf"/></svg></button>
      </div>
      <div class="col">
        <button class="med"><svg class="i24"><use href="#offf"/></svg></button>
        <button class="med"><svg class="i24"><use href="#resz"/></svg></button>
      </div>
      <button class="big"><svg class="i32"><use href="#cyc"/></svg>更多<i class="caret"></i></button>
    </div>
    <div class="gfoot mid"><span>同步建模</span><i class="caret"></i></div>
  </div>
  <div class="group g4">
    <div class="gbody rows">
      <div class="irow"><button><svg class="i16"><use href="#chkf"/></svg></button><button><svg class="i16"><use href="#lay"/></svg></button><button><svg class="i16"><use href="#layg"/></svg></button><i class="is"></i><button><svg class="i16"><use href="#tag"/></svg></button></div>
      <div class="irow"><button><svg class="i16"><use href="#okp"/></svg></button><button><svg class="i16"><use href="#okh"/></svg></button><button><svg class="i16"><use href="#okc"/></svg></button><i class="is"></i><button><svg class="i16"><use href="#exp"/></svg></button></div>
    </div>
    <div class="gfoot"><span>标准化工具 - G...</span><i class="caret"></i></div>
  </div>
  <div class="group g5">
    <div class="gbody rows">
      <div class="irow"><button><svg class="i16"><use href="#gear1"/></svg></button><button><svg class="i16"><use href="#gear2"/></svg></button></div>
      <div class="irow"><button><svg class="i16"><use href="#hand"/></svg></button></div>
    </div>
    <div class="gfoot"><span>齿轮...</span><i class="caret"></i></div>
  </div>
  <div class="group g6">
    <div class="gbody rows">
      <div class="irow"><button><svg class="i16"><use href="#spr1"/></svg></button><button><svg class="i16"><use href="#spr2"/></svg></button></div>
      <div class="irow"><button><svg class="i16"><use href="#spr3"/></svg></button><i class="is"></i><button><svg class="i16"><use href="#spr4"/></svg></button></div>
    </div>
    <div class="gfoot"><span>弹簧...</span><i class="caret"></i></div>
  </div>
  <div class="group g5">
    <div class="gbody rows">
      <div class="irow"><button><svg class="i16"><use href="#ncok"/></svg></button><button><svg class="i16"><use href="#ncdoc"/></svg></button></div>
      <div class="irow"><button><svg class="i16"><use href="#nctab"/></svg></button><button><svg class="i16"><use href="#csys"/></svg></button></div>
    </div>
    <div class="gfoot"><span>加工...</span><i class="caret"></i></div>
  </div>
  <div class="group g8">
    <div class="gbody rows">
      <div class="irow"><button><svg class="i16"><use href="#tri"/></svg></button><button><svg class="i16"><use href="#tab2"/></svg></button><button><svg class="i16"><use href="#fold1"/></svg></button><button><svg class="i16"><use href="#fold2"/></svg></button></div>
      <div class="irow"><button><svg class="i16"><use href="#note"/></svg></button><button><svg class="i16"><use href="#brush"/></svg></button><i class="is"></i><button><svg class="i16" viewBox="0 0 18 18"><path d="M2 3l4-2 3 2 4-2 4 3-2 5-4-1-3-3-3 2-3-2z" fill="#345"/><circle cx="5" cy="5" r="1.500" fill="#8ac"/><circle cx="13" cy="6" r="1.500" fill="#8ac"/><text x="0" y="17" class="ib">10<tspan fill="#c00000">H7</tspan></text></svg></button><i class="is"></i><button><svg class="i16"><use href="#cadd"/></svg></button></div>
    </div>
    <div class="gfoot"><span>建模工具 - GC工...</span><i class="caret"></i></div>
  </div>
  <div class="group g9">
    <div class="gbody rows">
      <div class="irow"><button><svg class="i16"><use href="#gold"/></svg></button></div>
      <div class="irow"><button><svg class="i16"><use href="#gold"/></svg></button></div>
    </div>
    <div class="gfoot"><span>P..</span><i class="caret"></i></div>
  </div>
  <div class="group g10">
    <div class="gbody rows">
      <div class="irow">
        <button><svg class="i16"><use href="#tdim"/></svg></button><i class="is"></i>
        <button><svg class="i16"><use href="#ix"/></svg></button>
        <button class="tol"><b>1.00</b><b class="r">±.05</b></button>
        <button class="tol"><b>1.00</b><b class="r">+.05<br>-.02</b></button>
        <button class="tol"><b>1.00</b><b class="r">+.05<br><em>-.00</em></b></button>
        <button class="tol"><b>1.00</b><b class="r"><em>+.00</em><br>-.02</b></button>
        <button><svg class="i16"><use href="#ixb"/></svg></button>
        <button><svg class="i16"><use href="#ixp"/></svg></button>
        <button class="tol u"><b>10H7</b></button>
        <button class="tol u"><b>10H7</b><b>(8·⁰¹)</b></button>
        <button class="tol u"><b>10H7</b><b>(8⁰¹⁵)</b></button>
        <button class="tol u"><b>10</b><b>(8⁰¹⁵)</b></button>
      </div>
      <div class="irow"><button><svg class="i16" viewBox="0 0 18 18"><path d="M2 13l4-5h12" fill="none" stroke="#b00"/><path d="M0 14l2-4 3 3z" fill="#b00"/><text x="4" y="6" class="ib red">R|Ø|</text></svg></button><button><svg class="i16" viewBox="0 0 18 18"><path d="M3 15L16 3" stroke="#b00"/><path d="M2 17l1-5 4 3z" fill="#b00"/><text x="3" y="10" class="ib red" transform="rotate(-42 3 10)">RØ</text></svg></button><i class="is"></i><button><svg class="i16"><use href="#dia1"/></svg></button><button><svg class="i16"><use href="#dia2"/></svg></button><button><svg class="i16"><use href="#rot"/></svg></button></div>
    </div>
    <div class="gfoot mid"><span>尺寸快速格式化工具 - GC工具箱</span><i class="caret"></i></div>
  </div>
  <div class="group last"><div class="gfoot"><i class="caret"></i></div></div>
</section>

<section class="selbar">
  <button class="menubtn"><svg class="i12" viewBox="0 0 12 12"><path d="M0 1.500h12M0 6h12M0 10.500h12" stroke="#333"/></svg><span>菜单(<u>M</u>)</span><i class="caret"></i></button>
  <i class="ls"></i>
  <span class="sel s1"><select aria-label="选择过滤器"><option>无选择过滤器</option></select></span>
  <button class="tb"><svg class="i18"><use href="#filt"/></svg></button>
  <span class="sel s2"><select aria-label="选择范围"><option>整个装配</option></select></span>
  <button class="tb hot"><svg class="i18"><use href="#asm"/></svg></button>
  <button class="tb"><svg class="i16"><use href="#link"/></svg></button>
  <button class="tb dd"><svg class="i18"><use href="#fdoc"/></svg><i class="caret"></i></button>
  <button class="tb"><svg class="i16"><use href="#rect"/></svg></button>
  <button class="tb"><svg class="i16"><use href="#obox"/></svg></button>
  <button class="tb dd w"><svg class="i16"><use href="#osq"/></svg><i class="caret"></i></button>
  <button class="tb"><svg class="i16"><use href="#cf1"/></svg></button>
  <button class="tb"><svg class="i16"><use href="#cf2"/></svg></button>
  <i class="ls"></i><i class="caret end"></i>
</section>

<main class="main">
  <aside class="side">
    <button class="s0" aria-label="设置"><svg class="i14"><use href="#cog"/></svg></button>
    <button aria-label="装配导航器"><svg class="i24"><use href="#nav"/></svg></button>
    <button aria-label="约束导航器"><svg class="i24"><use href="#con"/></svg></button>
    <button aria-label="部件导航器"><svg class="i24"><use href="#part"/></svg></button>
    <button aria-label="重用库"><svg class="i24"><use href="#books"/></svg></button>
    <button aria-label="视图管理器"><svg class="i24"><use href="#pdim"/></svg></button>
    <button aria-label="检查"><svg class="i24"><use href="#mag2"/></svg></button>
    <button class="tall first" aria-label="信息"><svg class="i24"><use href="#info"/></svg></button>
    <button class="tall" aria-label="网页浏览器"><svg class="i24"><use href="#web"/></svg></button>
    <button class="tall" aria-label="历史记录"><svg class="i24"><use href="#clock"/></svg></button>
    <button class="wandb" aria-label="角色"><svg class="i24"><use href="#wand"/></svg></button>
    <svg class="scr" viewBox="0 0 32 70"><path d="M2 2q8 7 14 2t13-3" fill="none" stroke="#555" stroke-width="1.200"/><path d="M12 15l3-3 3 3zM12 17.500h7M12 32l3-3 3 3z" fill="#999" stroke="#999" stroke-width=".5"/><path d="M12 45h6l-3 3zM12 59h6M12 61h6l-3 3z" fill="#111" stroke="#111" stroke-width=".7"/></svg>
  </aside>
  <div class="work">
    <div class="ptabs">
      <a href="#" class="pt"><svg class="i18"><use href="#disc"/></svg>发现中心</a>
      <a href="#" class="pt on"><svg class="i16"><use href="#part"/></svg>_model1.prt<svg class="i12" viewBox="0 0 12 12"><path d="M8 1H2v10h7V8M5 6l3 2 3-3M8 1l2 3" fill="none" stroke="#fff" stroke-width="1.500"/></svg><svg class="i10" viewBox="0 0 10 10"><path d="M1 1l8 8M9 1L1 9" stroke="#fff" stroke-width="2"/></svg></a>
    </div>
    <div class="canvas">
    <svg class="scene" viewBox="39 204 1291 539" preserveAspectRatio="xMidYMid meet" role="img" aria-label="滚刀模型">
    <defs>
      <linearGradient id="fA" x1="0" x2="1" y1="0" y2="1"><stop offset="0" stop-color="#878787"/><stop offset="1" stop-color="#787878"/></linearGradient>
      <linearGradient id="fE" x1="0" x2="1"><stop offset="0" stop-color="#5c5c5c"/><stop offset=".12" stop-color="#858585"/><stop offset="1" stop-color="#8b8b8b"/></linearGradient>
      <linearGradient id="fF" x1="0" x2="1"><stop offset="0" stop-color="#666"/><stop offset=".2" stop-color="#828282"/><stop offset="1" stop-color="#7a7a7a"/></linearGradient>
      <linearGradient id="gv" gradientUnits="userSpaceOnUse" x1="500" y1="550" x2="487" y2="577"><stop offset="0" stop-color="#606060"/><stop offset=".5" stop-color="#949494"/><stop offset="1" stop-color="#606060"/></linearGradient>
      <linearGradient id="gv2" gradientUnits="userSpaceOnUse" x1="500" y1="756" x2="485" y2="787"><stop offset="0" stop-color="#4a4a4a"/><stop offset=".5" stop-color="#6c6c6c"/><stop offset="1" stop-color="#969696"/></linearGradient>
      <linearGradient id="r1" gradientUnits="userSpaceOnUse" x1="100" y1="950" x2="560" y2="330" gradientTransform="rotate(63.800) translate(-315 -604)"><stop offset="0" stop-color="#555"/><stop offset=".4" stop-color="#777"/><stop offset=".72" stop-color="#a2a2a2"/><stop offset="1" stop-color="#707070"/></linearGradient>
      <linearGradient id="r3" gradientUnits="userSpaceOnUse" x1="100" y1="800" x2="500" y2="290" gradientTransform="rotate(63.800) translate(-335 -615)"><stop offset="0" stop-color="#4c4c4c"/><stop offset=".3" stop-color="#6c6c6c"/><stop offset=".6" stop-color="#9a9a9a"/><stop offset=".76" stop-color="#d0d0d0"/><stop offset=".88" stop-color="#8e8e8e"/><stop offset="1" stop-color="#747474"/></linearGradient>
      <linearGradient id="r5" gradientUnits="userSpaceOnUse" x1="240" y1="860" x2="550" y2="460" gradientTransform="rotate(63.800) translate(-356 -626)"><stop offset="0" stop-color="#858585"/><stop offset=".27" stop-color="#d0d0d0"/><stop offset=".55" stop-color="#999"/><stop offset="1" stop-color="#4a4a4a"/></linearGradient>
      <linearGradient id="r6" gradientUnits="userSpaceOnUse" x1="250" y1="800" x2="410" y2="430" gradientTransform="rotate(63.800) translate(-337 -612)"><stop offset="0" stop-color="#7e7e7e"/><stop offset=".35" stop-color="#868686"/><stop offset=".7" stop-color="#5e5e5e"/><stop offset="1" stop-color="#565656"/></linearGradient>
      <g id="a1"><path d="M530 30L488 118 540 200 600 160 640 70z" fill="#686868"/><path d="M530 31Q575 22 626 38L620 90 612 75 550 150 528 80z" fill="#7a7a7a"/><path d="M530 82Q570 76 606 82M530 30L526 85M612 75L550 150"/></g>
      <g id="b1"><path d="M345 108L313 203Q308 214 298 208L271 188 330 270 420 320 400 250 380 243 353 113z" fill="#5b5b5b"/><path d="M345 110Q390 72 445 55L467 128 480 180 400 250Q385 250 376 235z" fill="url(#fA)"/><path d="M352 114Q395 80 444 62" class="hl"/><path d="M364 162Q410 125 464 108"/></g>
      <g id="c1"><path d="M183 287L183 398 270 442 270 402 255 390z" fill="#4c4c4c"/><path d="M185 287Q215 230 265 182L320 250 360 320 270 402Q260 400 253 388z" fill="url(#fA)"/><path d="M192 288Q222 236 267 192" class="hl"/><path d="M216 323Q250 265 300 226"/></g>
      <g id="d1"><path d="M75 520L100 548 130 580 200 612 220 600 180 560z" fill="#3e3e3e"/><path d="M122 390L208 432 225 455 185 590 75 520Q85 450 122 390z" fill="url(#fE)"/><path d="M168 413Q135 480 120 545"/></g>
      <g id="e1"><path d="M690 208L708 222 660 242 680 215z" fill="#444"/><path d="M567 205L690 208 685 225 655 242 648 350 562 338Q558 270 567 205z" fill="url(#fE)"/><path d="M620 208Q608 280 613 345"/></g>
      <g id="f1"><path d="M612 367L628 373 612 396 600 380z" fill="#484848"/><path d="M492 402L612 367Q620 385 578 435L585 500 545 514Q530 520 525 500 495 460 492 402z" fill="url(#fF)"/><path d="M545 390Q555 450 580 502"/></g>
      <g id="h1"><path d="M583 588L614 528 670 560 640 600z" fill="#858585"/><path d="M583 592L650 542 710 600 670 657Q620 635 583 592z" fill="#686868"/><path d="M628 568Q650 590 675 610"/></g>
      <g id="z1"><path d="M655 74Q680 70 697 68 706 68 712 78L742 112 740 190 680 150z" fill="#737373"/></g>
      <g id="a2"><use href="#a1"/><use href="#a1" x="87" y="42.500"/></g><g id="a4"><use href="#a2"/><use href="#a2" x="174" y="85"/></g>
      <g id="b2"><use href="#b1"/><use href="#b1" x="87" y="42.500"/></g>
      <g id="c2"><use href="#c1"/><use href="#c1" x="87" y="42.500"/></g><g id="c4"><use href="#c2"/><use href="#c2" x="174" y="85"/></g>
      <g id="d2"><use href="#d1"/><use href="#d1" x="87" y="42.500"/></g><g id="d4"><use href="#d2"/><use href="#d2" x="174" y="85"/></g>
    </defs>
    <g class="gear" stroke-linejoin="round">
      <g transform="translate(400 220) scale(.33333)">
        <path d="M500 140L640 110 700 130 1290 415 1390 500 1420 560 1390 680 1390 900 1180 1240 850 1390 600 1250 250 1060 110 960 75 780 130 600 200 400 320 250 400 200z" fill="#757575" stroke="none"/>
        <use href="#z1"/><use href="#z1" x="87" y="42.500"/><use href="#z1" x="174" y="85"/><use href="#z1" x="261" y="127.500"/><use href="#z1" x="348" y="170"/><use href="#z1" x="435" y="212.500"/><use href="#z1" x="522" y="255"/>
        <use href="#a4"/><use href="#a4" x="348" y="170"/>
        <path d="M345 110L325 160 320 250 405 300 400 250 380 245z" fill="#5b5b5b"/>
        <path d="M345 110Q390 72 445 55L467 128 480 180 400 250Q385 250 376 235z" fill="url(#fA)"/><path d="M352 114Q395 80 444 62" class="hl"/><path d="M364 162Q410 125 464 108"/>
        <use href="#b2" x="87" y="42.500"/><use href="#b2" x="261" y="127.500"/><use href="#b2" x="435" y="212.500"/><use href="#b1" x="609" y="297.500"/>
        <use href="#c4"/><use href="#c4" x="348" y="170"/>
        <path d="M200 403L860 727Q868 745 850 752L200 434 190 425z" fill="url(#gv)"/>
        <use href="#d4"/><use href="#d4" x="348" y="170"/>
        <path d="M120 605L85 608 50 635 60 800 60 900 400 1060 700 1220 860 1160 800 930z" fill="#7e7e7e" stroke="none"/>
        <path d="M130 580L790 890Q795 915 775 925L120 605Q132 595 130 580z" fill="url(#gv2)"/>
      </g>
      <g transform="translate(400 450) scale(.33333)">
        <use href="#e1" x="-522" y="-255"/><use href="#e1" x="-435" y="-212.500"/><use href="#e1" x="-348" y="-170"/><use href="#e1" x="-261" y="-127.500"/><use href="#e1" x="-174" y="-85"/><use href="#e1" x="-87" y="-42.500"/><use href="#e1"/>
        <path d="M95 318L135 300 165 340 165 380 150 403Q115 375 92 325z" fill="#686868"/>
        <use href="#h1" x="-435" y="-212.500"/><use href="#h1" x="-348" y="-170"/><use href="#h1" x="-261" y="-127.500"/><use href="#h1" x="-174" y="-85"/><use href="#h1" x="-87" y="-42.500"/><use href="#h1"/>
        <path d="M52 125L95 112 105 122 60 185 65 245 52 190z" fill="#747474"/>
        <use href="#f1" x="-435" y="-212.500"/><use href="#f1" x="-348" y="-170"/><use href="#f1" x="-261" y="-127.500"/><use href="#f1" x="-174" y="-85"/><use href="#f1" x="-87" y="-42.500"/><use href="#f1"/>
        <path d="M668 632L700 545 780 540 830 560 770 600z" fill="#858585"/>
        <path d="M755 700L800 665 850 650 850 700z" fill="#626262"/>
        <path d="M670 635L773 562 850 612 797 670 755 700Q700 670 670 635z" fill="#6e6e6e"/><path d="M718 605Q760 650 797 670"/><path d="M773 562L830 585 850 612z" fill="#444"/>
        <path d="M578 445L698 408 745 520 672 545 625 557Q585 510 578 445z" fill="url(#fF)"/><path d="M632 432Q645 500 672 545"/><path d="M698 408L745 430 782 538 745 520z" fill="#4c4c4c"/>
      </g>
      <g transform="translate(660 320) scale(.33333)">
        <path d="M455 95L520 55Q560 75 590 122L560 210 480 175z" fill="#777"/><path d="M520 55L455 95 450 210 480 165z" fill="#888"/><path d="M505 105Q550 120 578 158"/>
        <path d="M625 187Q655 240 655 300L638 325 560 208z" fill="#777"/><path d="M625 187L560 208 565 270 590 240z" fill="#888"/><path d="M608 218Q630 270 634 310"/>
        <path d="M360 28Q410 20 455 32L445 155Q390 148 348 162z" fill="#7b7b7b"/><path d="M358 78Q405 72 452 82"/><path d="M360 26L292 105 312 180 348 160z" fill="#666"/>
        <path d="M610 415L658 395 658 428 612 430z" fill="#666"/>
        <path d="M45 1120L50 1025 90 1000 240 1040 165 1133Q100 1133 50 1122z" fill="#686868"/><path d="M85 1092Q140 1100 195 1094M50 1122L125 1028"/>
        <path d="M275 1030L408 965 372 1065 255 1113z" fill="#5a5a5a"/><path d="M232 1048L275 1000 298 1030 265 1105Q252 1120 245 1108z" fill="#4c4c4c"/><path d="M280 1070Q340 1050 390 1018"/>
        <path d="M440 930L555 855 555 903 457 997z" fill="#5a5a5a"/><path d="M450 960Q510 920 555 875"/>
        <path d="M-30 1080L0 1040 60 1015 50 1095z" fill="#606060"/><path d="M0 1050L45 1055"/>
        <path d="M205 237Q250 195 310 178L315 180 315 210Q322 228 338 218L352 162Q410 148 465 165L455 205Q462 222 480 210L500 178Q570 210 605 265L565 262Q548 285 570 297L590 292 630 300 650 388 613 405Q605 425 625 425L742 437Q745 500 727 570L610 580Q596 590 602 612L688 680 625 803 545 758 530 785Q545 820 555 860L457 940 440 915Q430 895 415 908L408 968Q360 1010 298 1030L298 990Q288 972 275 990L240 1046 125 1035 158 1005Q163 980 145 988L108 1028Q50 1000 0 950L45 930Q60 910 45 908L0 928-35 820-80 798-10 800Q8 785-5 770L-130 767-125 635-10 628Q20 610 10 590L-70 538Q-50 470 0 410L60 445Q90 450 82 430L65 345Q110 295 162 265L175 297Q200 310 203 290z" fill="#707070"/>
        <path d="M178 108L135 205 130 220 175 297Q200 310 203 290L205 237z" fill="#5a5a5a"/><path d="M10 285L12 350Q8 358 0 355L-40 340-40 372 82 430 65 345z" fill="#4c4c4c"/>
        <path d="M412 950L412 915Q425 890 438 912L460 996Q425 970 412 950z" fill="#4a4a4a"/>
        <ellipse rx="381" ry="267" transform="translate(315 604) rotate(-63.800)" fill="url(#r1)"/>
        <ellipse rx="370" ry="259" transform="translate(325 610) rotate(-63.800)" fill="#555"/>
        <ellipse rx="363" ry="254" transform="translate(335 615) rotate(-63.800)" fill="url(#r3)"/>
        <ellipse rx="334" ry="232" transform="translate(354 626) rotate(-63.800)" fill="#707070"/>
        <ellipse rx="261" ry="182" transform="translate(356 626) rotate(-63.800)" fill="url(#r5)"/>
        <ellipse rx="236" ry="164" transform="translate(337 612) rotate(-63.800)" fill="url(#r6)"/>
        <path d="M293 375L425 323 425 378 385 392 340 372 300 380 293 430z" fill="#606060"/><path d="M293 375L425 323 385 350 330 368z" fill="#444"/><path d="M382 353L425 325 425 378 385 392z" fill="#7a7a7a"/><path d="M296 378L340 372 385 392 330 405 296 425z" fill="#5c5c5c" stroke="none"/>
      </g>
    </g>
    <g class="triad">
      <path d="M94 649l22-9 22 10v27l-23 9-21-9zM94 649l21 9 23-8M115 658v28" fill="none" stroke="#b0b0b0" stroke-width="1.300"/>
      <path d="M116.500 650v-25" stroke="#1e6e22" stroke-width="3"/><path d="M116.500 615l-4 13h8z" fill="#1e6e22"/>
      <path d="M94 653l-13-7 12 0 3 5z" fill="#1a3fc8"/>
      <path d="M105 667l-18 6" stroke="#c83232" stroke-width="4"/><path d="M77 678l14-9 2 6z" fill="#c83232"/>
      <text x="112" y="610" fill="#2c7d2c">Y</text><text x="70" y="647" fill="#3050f0">Z</text><text x="65" y="684" fill="#d03030">X</text>
    </g>
    </svg>
    </div>
  </div>
  <aside class="rbar">
    <button aria-label="隐藏"><svg class="i24"><use href="#eye"/></svg></button>
    <button aria-label="收藏一"><svg class="i24"><use href="#star"/></svg></button>
    <button aria-label="收藏二"><svg class="i24"><use href="#star"/></svg></button>
    <button aria-label="拉伸"><svg class="i24"><use href="#ext"/></svg></button>
    <button aria-label="适合窗口"><svg class="i24"><use href="#fit"/></svg></button>
    <button aria-label="移动对象"><svg class="i24"><use href="#omv"/></svg></button>
    <button aria-label="测量"><svg class="i24"><use href="#ruler"/></svg></button>
    <button aria-label="移动坐标系"><svg class="i24"><use href="#amv"/></svg></button>
    <button aria-label="收藏三"><svg class="i24"><use href="#star"/></svg></button>
    <button aria-label="显示坐标系"><svg class="i24"><use href="#aeye"/></svg></button>
    <hr><i class="lcaret"></i>
  </aside>
</main>
<footer class="status"><span>选择对象并使用 MB3，或者双击某一对象</span><span class="mark">UG<b>爱好者论坛</b> WWW.UGSNX.COM</span></footer>
</body>
</html>
```

FILE: styles.css
```css
* { box-sizing: border-box; }
html, body { height: 100%; }
body { margin: 0; display: flex; flex-direction: column; background: #fff; color: #222; font: 11px/16px "Noto Sans", "Noto Sans CJK SC", sans-serif; overflow: hidden; }
button { font: inherit; color: inherit; background: none; border: 0; padding: 0; margin: 0; display: flex; align-items: center; justify-content: center; }
a { color: inherit; text-decoration: none; }
svg { flex: none; }
.defs { width: 0; height: 0; position: absolute; }
.i10 { width: 10px; height: 10px; }
.i12 { width: 12px; height: 12px; }
.i14 { width: 14px; height: 14px; }
.i16 { width: 17px; height: 17px; }
.i18 { width: 18px; height: 18px; }
.i24 { width: 24px; height: 24px; }
.i32 { width: 33px; height: 33px; }
.irow svg { overflow: visible; }
.ib { font: bold 7px "Liberation Sans", sans-serif; }
.ib.red { fill: #b00000; }
.caret { flex: none; width: 0; height: 0; border: 3px solid transparent; border-top-color: currentColor; border-bottom: 0; }

.head { flex: none; color: #fff; background: linear-gradient(100deg, #006285, #00688c 35%, #067aa6); }
.titlebar { height: 27px; display: flex; align-items: center; }
.quick { display: flex; align-items: center; gap: 5px; padding-left: 4px; }
.logo { font: 800 22px/26px "Open Sans", sans-serif; width: 35px; }
.vs { width: 1px; height: 18px; background: #004e6c; }
.off { opacity: .25; }
.flip svg { transform: scaleX(-1); }
.hide { margin-left: 4px; }
.winbtn { gap: 3px; }
.caret.near { margin: 0 2px; }
.caret.wide { margin: 0 3px; }
.title { flex: 1; margin: 0; text-align: center; font-size: 13px; font-weight: 400; }
.wctl { display: flex; align-items: center; gap: 11px; padding-right: 8px; }
.brand { font: 800 14px/16px "Open Sans", sans-serif; margin-right: 12px; }
.menurow { height: 29px; display: flex; align-items: center; }
.tabs { display: flex; align-self: stretch; font-size: 13px; flex: 1; }
.tabs a { padding: 0 16px; line-height: 27px; height: 27px; }
.tabs .file { width: 86px; padding: 0 20px; }
.tabs .on { color: #ffc83d; border-bottom: 2px solid #ffc83d; }
.search { display: flex; width: 129px; height: 22px; background: #fff; border: 1px solid #777; }
.search input { min-width: 0; flex: 1; border: 0; padding: 0; font: inherit; outline: 0; background: none; }
.search input::placeholder { color: #999; }
.search button { width: 22px; }
.hicons { display: flex; gap: 9px; padding: 0 6px 0 9px; }

.ribbon { flex: none; display: flex; height: 94px; border-bottom: 1px solid #d0d0d0; padding-top: 4px; }
.group { flex: none; display: flex; flex-direction: column; justify-content: space-between; border-right: 1px solid #d4d4d4; height: 85px; }
.gbody { display: flex; height: 70px; }
.gfoot { display: flex; align-items: center; justify-content: space-between; height: 16px; padding: 0 8px 0 1px; color: #00648c; white-space: nowrap; margin-bottom: -3px; overflow: hidden; }
.gfoot .caret { color: #222; }
.gfoot.mid span { flex: 1; text-align: center; }
.g1 { width: 63px; }
.g1 .gbody { padding-left: 13px; }
.g1 .gfoot { padding-left: 12px; }
.g2 { width: 479px; }
.g2 .gbody { padding-left: 7px; }
.g2 .gfoot { padding-right: 8px; }
.g3 { width: 115px; }
.g4 { width: 104px; }
.g5 { width: 52px; }
.g6 { width: 58px; }
.g6 .gfoot { padding-left: 4px; }
.g8 { width: 110px; }
.g9 { width: 29px; }
.g10 { width: 288px; }
.last { flex: 1; border: 0; justify-content: flex-end; }
.last .gfoot { justify-content: flex-end; padding-right: 6px; }
.big { flex-direction: column; justify-content: flex-start; width: 41px; line-height: 23px; }
.big .caret { margin-top: 1px; }
.col { display: flex; flex-direction: column; }
.med { height: 35px; gap: 4px; justify-content: flex-start; }
.g1 .med { gap: 8px; }
.sm { height: 23px; gap: 4px; justify-content: flex-start; }
.col.three { margin-top: -2px; }
.g2 .three { width: 71px; margin-left: 4px; }
.g2 .three .caret { margin-left: auto; }
.c4 { width: 59px; margin-left: 8px; }
.c5 { width: 81px; }
.g3 .gbody { padding-left: 11px; }
.g3 .col.three { width: 24px; }
.g3 .big { margin-left: 10px; }
.g3 .three + .col { width: 26px; }
.rows { flex-direction: column; padding: 2px 0 0 3px; }
.irow { display: flex; height: 30px; align-items: center; }
.irow button { width: 23px; height: 26px; }
.is { width: 1px; height: 20px; background: #d4d4d4; margin: 0 3px 0 2px; }
.irow .tol { flex-direction: column; color: #111; }
.tol b { white-space: nowrap; font: bold 7px/8px "Liberation Sans", sans-serif; }
.tol .r { color: #b00020; line-height: 6px; }
.tol em { color: #888; font-style: normal; }
.irow .tol.u { color: #1010b0; }

.selbar { flex: none; display: flex; align-items: center; height: 28px; border-bottom: 1px solid #a0a0a0; padding: 0 6px 0 12px; }
.menubtn { gap: 6px; }
.ls { width: 1px; height: 20px; background: #ccc; margin: 0 12px 0 8px; }
.sel { position: relative; }
.sel select { appearance: none; width: 100%; height: 22px; border: 1px solid #707070; border-radius: 0; background: #fff; font: inherit; color: #111; padding: 0 2px; display: block; }
.sel::after { content: ""; position: absolute; right: 4px; top: 9px; border: 4px solid transparent; border-top-color: #222; border-bottom: 0; }
.s1 { width: 149px; }
.s2 { width: 156px; margin-right: 7px; }
.tb { width: 24px; height: 22px; }
.s1 + .tb { width: 33px; }
.hot { background: #cde6ec; border: 1px solid #a8d0dc; margin-right: 1px; }
.tb.dd { width: 36px; gap: 3px; margin-right: 1px; }
.tb.w { width: 40px; gap: 8px; }
.end { margin-left: auto; }

.main { flex: 1; min-height: 0; display: flex; }
.side { width: 32px; background: #dcdcdc; border-right: 1px solid #999; display: flex; flex-direction: column; overflow: hidden; }
.side button { flex: none; height: 42px; padding-left: 3px; }
.side .s0 { height: 24px; margin-bottom: 18px; padding: 0 2px 0 0; }
.side .tall { height: 53px; }
.side .first { margin-top: 8px; }
.side .wandb { height: 32px; }
.scr { width: 32px; height: 70px; }
.work { flex: 1; min-width: 0; display: flex; flex-direction: column; padding-left: 6px; }
.ptabs { flex: none; display: flex; height: 26px; border-bottom: 2px solid #005f87; font-size: 12px; }
.pt { display: flex; align-items: center; gap: 3px; padding: 0 22px 0 5px; }
.pt.on { background: #005f87; color: #fff; padding: 0 6px 0 5px; gap: 5px; }
.canvas { flex: 1; min-height: 0; border: solid #d4d4d4; border-width: 0 1px 1px 1px; }
.scene { display: block; width: 100%; height: 100%; }
.gear { stroke: #2c2c2c; stroke-width: 2.5; fill: none; }
.gear .hl { stroke: #a8a8a8; stroke-width: 7; }
.triad text { font: 12px "Noto Sans", sans-serif; }
.rbar { width: 35px; display: flex; flex-direction: column; align-items: center; padding-top: 8px; color: #444; }
.rbar button { height: 32px; }
.rbar hr { width: 27px; border: 0; border-top: 1px solid #ccc; margin: 6px 0 0; }
.lcaret { margin: auto auto 5px 8px; border: 3px solid transparent; border-right-color: #222; border-left: 0; }
.status { flex: none; height: 24px; display: flex; align-items: center; justify-content: space-between; border-top: 1px solid #999; border-bottom: 2px solid #0d4a60; padding: 0 5px 0 2px; font-weight: 700; color: #111; }
.mark { font: 13px/18px "Liberation Mono", "Noto Sans CJK SC", monospace; color: #666; }
.mark b { font-size: 16px; font-weight: 300; }
```
